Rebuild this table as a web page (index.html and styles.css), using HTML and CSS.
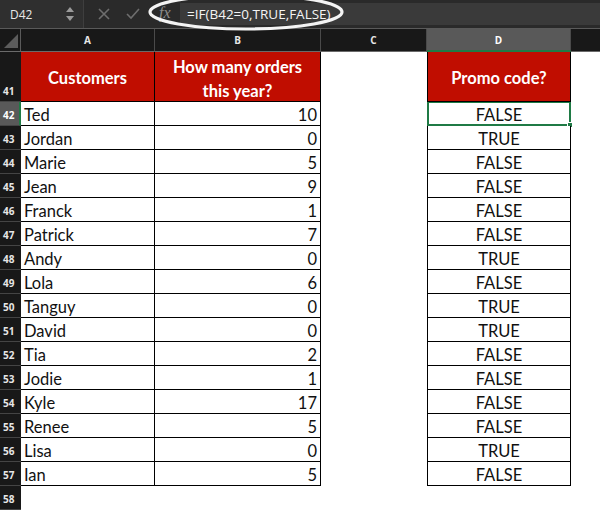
FILE: index.html
```html
<!DOCTYPE html>
<html>
<head>
<meta charset="utf-8">
<link rel="stylesheet" href="styles.css">
</head>
<body>
<div class="app">
  <div class="toolbar">
    <div class="namebox">
      <span class="ref">D42</span>
      <svg class="spin" width="10" height="16" viewBox="0 0 10 16"><path d="M1 6 L5 1 L9 6 Z" fill="#9a9a9a"/><path d="M1 10 L5 15 L9 10 Z" fill="#9a9a9a"/></svg>
    </div>
    <div class="btns">
      <svg width="12" height="12" viewBox="0 0 12 12"><path d="M1 1 L11 11 M11 1 L1 11" stroke="#6e6e6e" stroke-width="1.6"/></svg>
      <svg width="14" height="12" viewBox="0 0 14 12"><path d="M1 6 L5 10 L13 1" stroke="#6e6e6e" stroke-width="1.6" fill="none"/></svg>
    </div>
    <span class="fx">fx</span>
    <div class="formula">=IF(B42=0,TRUE,FALSE)</div>
    <svg class="ring" width="220" height="40" viewBox="0 0 220 40"><ellipse cx="98" cy="13" rx="96" ry="17" fill="none" stroke="#f4f4f4" stroke-width="3.2"/></svg>
  </div>
  <div class="sheet">
    <div class="corner"><div class="tri"></div></div>
    <div class="ch">A</div>
    <div class="ch">B</div>
    <div class="ch">C</div>
    <div class="ch sel">D</div>
    <div class="ch last"></div>

    <div class="rh tall">41</div>
    <div class="c a hd">Customers</div>
    <div class="c b hd">How many orders<br>this year?</div>
    <div class="c cc"></div>
    <div class="c d hd">Promo code?</div>
    <div class="c e"></div>

    <div class="rh selr">42</div><div class="c a">Ted</div><div class="c b">10</div><div class="c cc"></div><div class="c d active">FALSE<span class="handle"></span></div><div class="c e"></div>
    <div class="rh">43</div><div class="c a">Jordan</div><div class="c b">0</div><div class="c cc"></div><div class="c d">TRUE</div><div class="c e"></div>
    <div class="rh">44</div><div class="c a">Marie</div><div class="c b">5</div><div class="c cc"></div><div class="c d">FALSE</div><div class="c e"></div>
    <div class="rh">45</div><div class="c a">Jean</div><div class="c b">9</div><div class="c cc"></div><div class="c d">FALSE</div><div class="c e"></div>
    <div class="rh">46</div><div class="c a">Franck</div><div class="c b">1</div><div class="c cc"></div><div class="c d">FALSE</div><div class="c e"></div>
    <div class="rh">47</div><div class="c a">Patrick</div><div class="c b">7</div><div class="c cc"></div><div class="c d">FALSE</div><div class="c e"></div>
    <div class="rh">48</div><div class="c a">Andy</div><div class="c b">0</div><div class="c cc"></div><div class="c d">TRUE</div><div class="c e"></div>
    <div class="rh">49</div><div class="c a">Lola</div><div class="c b">6</div><div class="c cc"></div><div class="c d">FALSE</div><div class="c e"></div>
    <div class="rh">50</div><div class="c a">Tanguy</div><div class="c b">0</div><div class="c cc"></div><div class="c d">TRUE</div><div class="c e"></div>
    <div class="rh">51</div><div class="c a">David</div><div class="c b">0</div><div class="c cc"></div><div class="c d">TRUE</div><div class="c e"></div>
    <div class="rh">52</div><div class="c a">Tia</div><div class="c b">2</div><div class="c cc"></div><div class="c d">FALSE</div><div class="c e"></div>
    <div class="rh">53</div><div class="c a">Jodie</div><div class="c b">1</div><div class="c cc"></div><div class="c d">FALSE</div><div class="c e"></div>
    <div class="rh">54</div><div class="c a">Kyle</div><div class="c b">17</div><div class="c cc"></div><div class="c d">FALSE</div><div class="c e"></div>
    <div class="rh">55</div><div class="c a">Renee</div><div class="c b">5</div><div class="c cc"></div><div class="c d">FALSE</div><div class="c e"></div>
    <div class="rh">56</div><div class="c a">Lisa</div><div class="c b">0</div><div class="c cc"></div><div class="c d">TRUE</div><div class="c e"></div>
    <div class="rh">57</div><div class="c a">Ian</div><div class="c b">5</div><div class="c cc"></div><div class="c d">FALSE</div><div class="c e"></div>
    <div class="rh">58</div><div class="c blank"></div><div class="c blank"></div><div class="c blank"></div><div class="c blank"></div><div class="c blank"></div>
  </div>
</div>
</body>
</html>
```

FILE: styles.css
```css
* { box-sizing: border-box; }
html, body { margin: 0; padding: 0; background: #ffffff; }
.app { width: 600px; height: 510px; overflow: hidden; font-family: Lato, "Open Sans", sans-serif; }

.toolbar {
  position: relative;
  height: 29px;
  background: #2a2a2a;
  border-bottom: 1px solid #5a5a5a;
  display: flex;
  align-items: center;
}
.namebox {
  width: 84px;
  height: 100%;
  display: flex;
  align-items: center;
  justify-content: space-between;
  padding: 0 8px 0 10px;
  background: #2f2f2f;
  border-right: 1px solid #3e3e3e;
}
.ref { color: #e8e8e8; font-size: 12px; font-family: "Open Sans", sans-serif; }
.btns { display: flex; align-items: center; gap: 16px; padding-left: 14px; width: 146px; }
.fx {
  position: absolute;
  left: 159px;
  top: 4px;
  font-family: "Liberation Serif", serif;
  font-style: italic;
  font-size: 16px;
  color: #8a8a8a;
}
.formula {
  position: absolute;
  left: 180px;
  right: 0;
  top: 3px;
  height: 22px;
  background: #3a3a3a;
  color: #f4f4f4;
  font-family: "Open Sans", sans-serif;
  font-size: 13.5px;
  font-weight: 500;
  line-height: 22px;
  padding-left: 7px;
}
.ring { position: absolute; left: 148px; top: -1px; }

.sheet {
  display: grid;
  grid-template-columns: 21px 134px 166px 106px 144px 29px;
  grid-template-rows: 23px 50px repeat(16, 24px) 24px;
}
.corner {
  background: #181818;
  border-right: 1px solid #5a5a5a;
  border-bottom: 1px solid #6a6a6a;
  position: relative;
}
.tri {
  position: absolute;
  right: 2px;
  bottom: 3px;
  width: 0; height: 0;
  border-left: 14px solid transparent;
  border-bottom: 14px solid #5c5c5c;
}
.ch {
  background: #181818;
  color: #e6e6e6;
  font-size: 10px;
  font-weight: 700;
  display: flex;
  align-items: center;
  justify-content: center;
  border-right: 1px solid #4a4a4a;
  border-bottom: 1px solid #6a6a6a;
  font-family: "Open Sans", sans-serif;
}
.ch.sel { background: #595959; border-bottom: 2px solid #1f7a45; color: #fff; }
.ch.last { border-right: none; }

.rh {
  background: #181818;
  color: #e6e6e6;
  font-family: "Open Sans", sans-serif;
  font-size: 10px;
  font-weight: 700;
  display: flex;
  align-items: center;
  padding-left: 3px;
  padding-top: 2px;
  border-bottom: 1px solid #444;
}
.rh.tall { align-items: flex-end; padding-bottom: 3px; }
.rh.selr { background: #595959; border-right: 2px solid #1f7a45; color: #fff; }

.c {
  background: #fff;
  color: #111;
  font-size: 16.5px;
  display: flex;
  align-items: center;
  padding-top: 3px;
  white-space: nowrap;
}
.c.a { border-right: 1px solid #000; border-bottom: 1px solid #000; padding-left: 3px; }
.c.b { border-right: 1px solid #000; border-bottom: 1px solid #000; justify-content: flex-end; padding-right: 3px; }
.c.d { border-left: 1px solid #000; border-right: 1px solid #000; border-bottom: 1px solid #000; justify-content: center; position: relative; }
.c.hd {
  background: #c00d00;
  color: #fff;
  font-weight: 700;
  font-size: 16.5px;
  justify-content: center;
  text-align: center;
  line-height: 24px;
  padding: 2px 0 0 0;
}
.c.b.hd { align-items: flex-start; padding-top: 3px; }
.c.d.active { border: 2px solid #1f7a45; border-top-width: 1px; }
.handle {
  position: absolute;
  right: -4px;
  bottom: -4px;
  width: 6px;
  height: 6px;
  background: #1f7a45;
  border: 1px solid #fff;
}
```
